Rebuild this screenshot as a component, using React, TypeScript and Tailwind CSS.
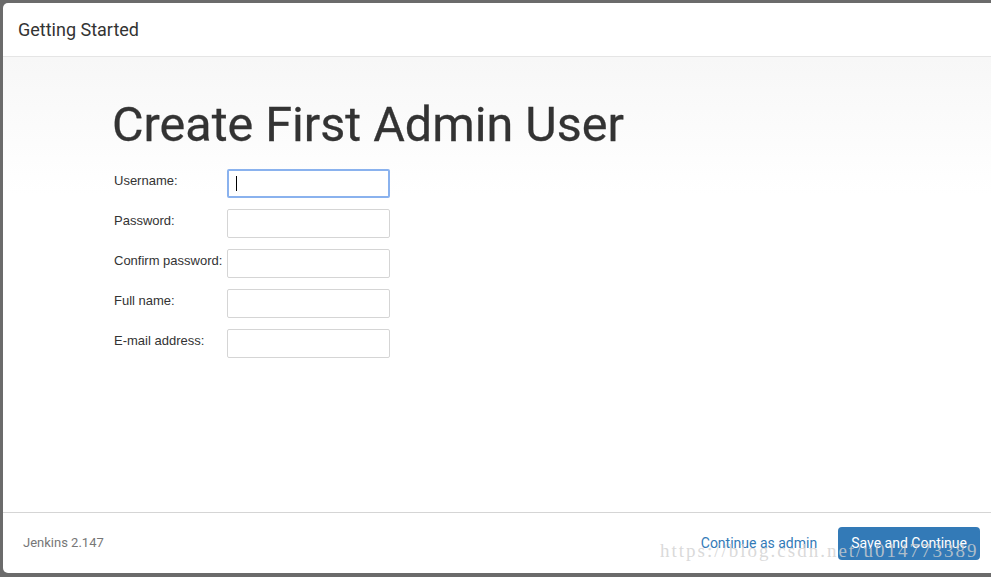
import React from "react";

const fields = [
  { label: "Username:", focused: true },
  { label: "Password:" },
  { label: "Confirm password:" },
  { label: "Full name:" },
  { label: "E-mail address:" },
];

export default function App() {
  return (
    <div className="h-[577px] w-[991px] overflow-hidden bg-[#6b6b6b] pl-[3px] pt-[3px] pb-[4px] font-['Roboto',sans-serif]">
      <div className="relative flex h-full flex-col overflow-hidden rounded-l-[5px] bg-white">
        {/* header */}
        <div className="flex h-[54px] shrink-0 items-center border-b border-[#e5e5e5] pl-[15px]">
          <h4 className="text-[18px] text-[#333]">Getting Started</h4>
        </div>

        {/* body */}
        <div className="flex-1 bg-gradient-to-b from-[#f7f7f7] to-white to-[30%] pl-[109px] pt-[40px]">
          <h1 className="text-[48.5px] leading-[56px] text-[#333] [-webkit-text-stroke:0.3px_#333]">Create First Admin User</h1>
          <div className="mt-[16px] flex flex-col gap-[11px]">
            {fields.map((f) => (
              <div key={f.label} className="flex items-start">
                <label className="w-[115px] pl-[2px] pt-[2px] font-['Liberation_Sans',Arial,sans-serif] text-[13px] leading-[20px] text-[#333]">
                  {f.label}
                </label>
                <div
                  className={
                    f.focused
                      ? "flex h-[29px] w-[163px] items-center rounded-[2px] border-2 border-[#8ab2ee] bg-white pl-[7px]"
                      : "h-[29px] w-[163px] rounded-[2px] border border-[#d5d5d5] bg-white"
                  }
                >
                  {f.focused && <span className="h-[15px] w-px bg-black" />}
                </div>
              </div>
            ))}
          </div>
        </div>

        {/* footer */}
        <div className="flex h-[61px] shrink-0 items-center border-t border-[#d5d5d5] pl-[20px] pr-[11px]">
          <span className="text-[13px] text-[#777]">Jenkins 2.147</span>
          <a className="ml-auto mr-[21px] text-[14px] text-[#337ab7]">Continue as admin</a>
          <button className="h-[33px] rounded-[4px] bg-[#337ab7] px-[13px] text-[14px] text-white">
            Save and Continue
          </button>
          <span className="pointer-events-none absolute bottom-[8px] left-[657px] font-['Liberation_Serif',serif] text-[19px] tracking-[2px] text-[#d0d0d0]/80">
            https://blog.csdn.net/u014773389
          </span>
        </div>
      </div>
    </div>
  );
}
